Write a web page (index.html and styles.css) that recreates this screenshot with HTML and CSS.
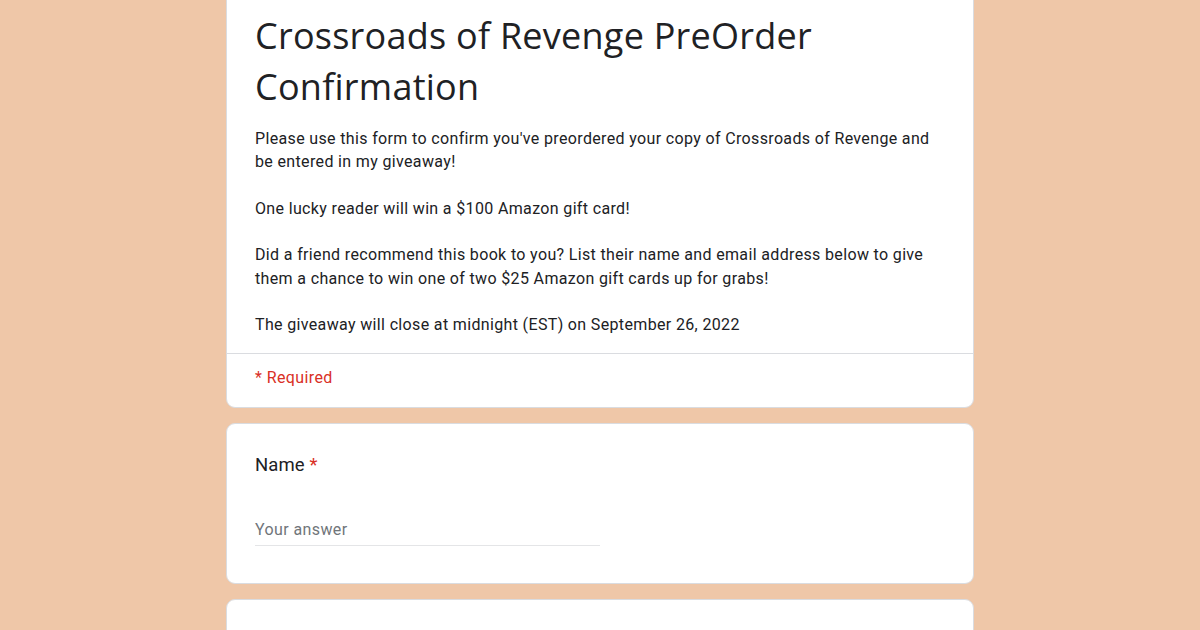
FILE: index.html
```html
<!DOCTYPE html>
<html lang="en">
<head>
  <meta charset="UTF-8">
  <title>Crossroads of Revenge PreOrder Confirmation</title>
  <link rel="stylesheet" href="styles.css">
</head>
<body>
  <div class="form-wrap">
    <div class="card header-card">
      <div class="header-main">
        <h1 class="form-title">Crossroads of Revenge PreOrder Confirmation</h1>
        <div class="form-desc">
          <p>Please use this form to confirm you've preordered your copy of Crossroads of Revenge and be entered in my giveaway!</p>
          <p>One lucky reader will win a $100 Amazon gift card!</p>
          <p>Did a friend recommend this book to you? List their name and email address below to give them a chance to win one of two $25 Amazon gift cards up for grabs!</p>
          <p>The giveaway will close at midnight (EST) on September 26, 2022</p>
        </div>
      </div>
      <div class="required-note">* Required</div>
    </div>

    <div class="card question">
      <div class="q-title">Name <span class="star">*</span></div>
      <div class="answer">Your answer</div>
    </div>

    <!-- next question starts below the fold -->
    <div class="card question next"></div>
  </div>
</body>
</html>
```

FILE: styles.css
```css
body {
  margin: 0;
  background-color: #efc7a8;
  font-family: Roboto, Arial, sans-serif;
  color: #202124;
}
.form-wrap {
  width: 748px;
  margin: -12px auto 0;
  display: flex;
  flex-direction: column;
  gap: 15px;
}
.card {
  background: #fff;
  border: 1px solid #dadce0;
  border-radius: 9px;
}
.header-main {
  padding: 21px 28px 16px;
}
.form-title {
  margin: 0 0 15px;
  font-family: "Open Sans", sans-serif;
  font-weight: 400;
  font-size: 36px;
  line-height: 51px;
  letter-spacing: 0.25px;
  color: #202124;
}
.form-desc {
  font-size: 16px;
  line-height: 23.3px;
  letter-spacing: 0.35px;
}
.form-desc p {
  margin: 0 0 23.3px;
}
.form-desc p:last-child {
  margin-bottom: 0;
}
.required-note {
  border-top: 1px solid #dadce0;
  padding: 13px 28px 18px;
  color: #d93025;
  font-size: 16px;
  line-height: 22px;
  letter-spacing: 0.4px;
}
.question {
  padding: 28px 28px 37px;
}
.question.next {
  height: 60px;
}
.q-title {
  font-size: 18.5px;
  line-height: 26px;
  letter-spacing: 0.1px;
}
.star {
  color: #d93025;
}
.answer {
  width: 345px;
  margin-top: 41px;
  padding-bottom: 4px;
  border-bottom: 1px solid #e4e5e7;
  color: #70757a;
  font-size: 16px;
  line-height: 22px;
  letter-spacing: 0.4px;
}
```
